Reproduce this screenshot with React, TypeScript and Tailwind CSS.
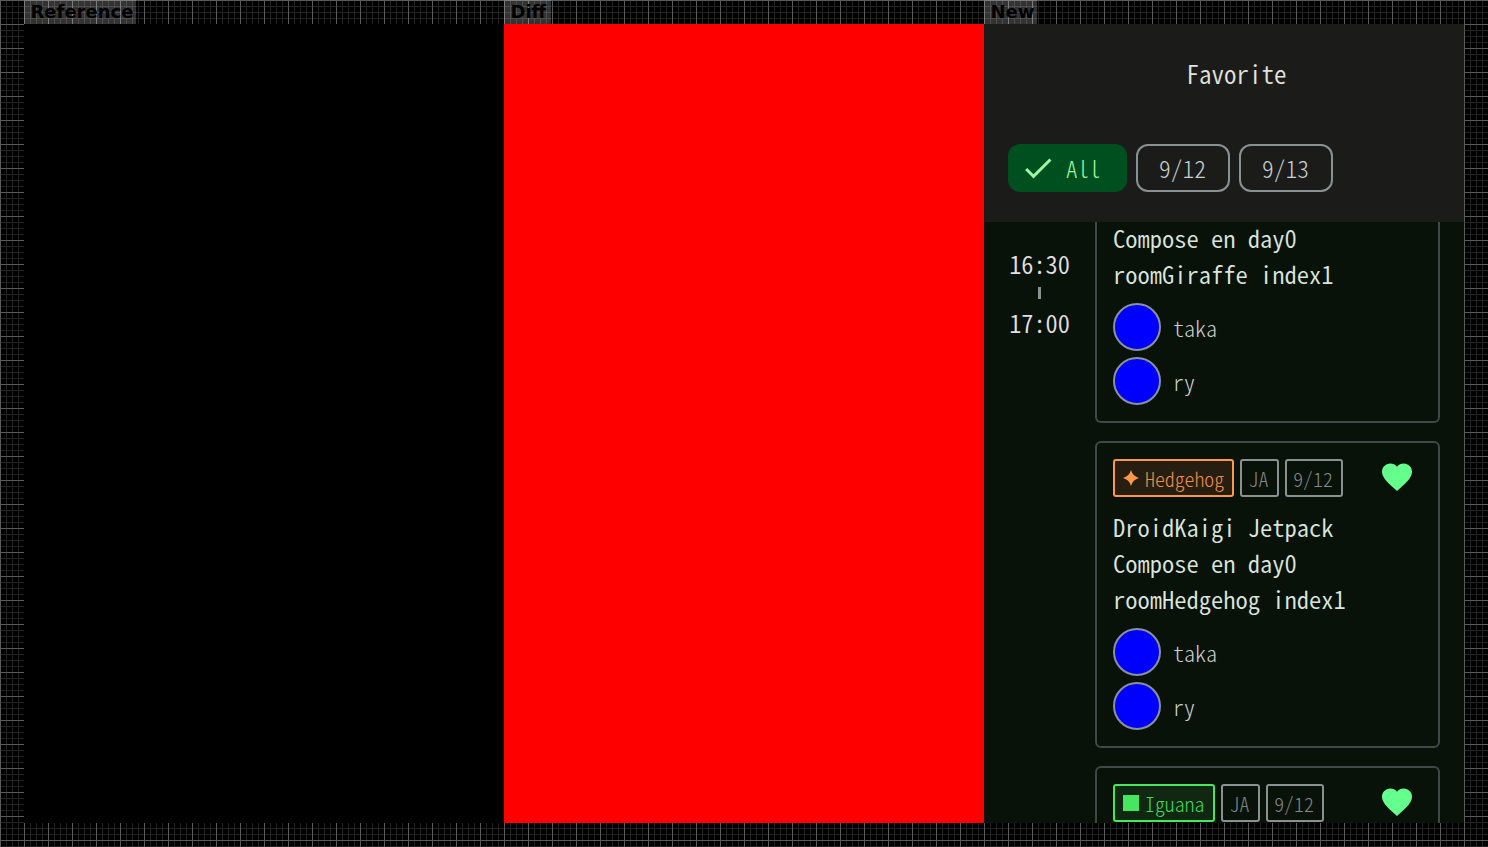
import type { ReactNode } from "react";

const mono = "font-['Noto_Sans_CJK_JP',sans-serif] font-light whitespace-pre [font-feature-settings:'hwid','liga'_0]";

function PaneLabel({ text, size }: { text: string; size: string }) {
  return (
    <div className={`h-6 bg-white/20 pl-[6.5px] font-['DejaVu_Sans',sans-serif] text-[18px] font-bold leading-[24px] text-black ${size}`}>
      {text}
    </div>
  );
}

function Pane({ label, size, children }: { label: string; size: string; children: ReactNode }) {
  return (
    <section className="flex w-[480px] flex-col">
      <PaneLabel text={label} size={size} />
      {children}
    </section>
  );
}

function Heart() {
  return (
    <svg className="ml-auto mr-[7px] size-9" viewBox="0 0 24 24" fill="#64ff8d">
      <path d="M12 21.35l-1.45-1.32C5.4 15.36 2 12.28 2 8.5 2 5.42 4.42 3 7.5 3c1.74 0 3.41.81 4.5 2.09C13.09 3.81 14.76 3 16.5 3 19.58 3 22 5.42 22 8.5c0 3.78-3.4 6.86-8.55 11.54L12 21.35z" />
    </svg>
  );
}

function Star() {
  return (
    <svg className="size-4" viewBox="0 0 16 16" fill="#ff974b">
      <path d="M8 0Q9.7 6.3 16 8Q9.7 9.7 8 16Q6.3 9.7 0 8Q6.3 6.3 8 0Z" />
    </svg>
  );
}

function Tag({ text, size }: { text: string; size: string }) {
  return (
    <div className={`flex h-[38px] items-center justify-center rounded-[3px] border-2 border-[#8b9193] pr-0.5 pt-0.5 text-[19.8px] leading-none text-[#828886] ${size}`}>
      {text}
    </div>
  );
}

function Speaker({ name }: { name: string }) {
  return (
    <div className="flex h-12 items-center">
      <div className="size-12 rounded-full border-2 border-[#8b9297] bg-[#0000ff]" />
      <span className="ml-3 text-[22px] leading-none text-[#c8d1cb]">{name}</span>
    </div>
  );
}

function CardBody({ title }: { title: string }) {
  return (
    <>
      <h2 className="text-[24.5px] font-[350] leading-9 text-[#dce5dc]">
        <span className="relative -top-0.5">{title}</span>
      </h2>
      <div className="mt-[9px] flex flex-col gap-1.5">
        <Speaker name="taka" />
        <Speaker name="ry" />
      </div>
    </>
  );
}

function CardTags({ room, icon, roomStyle }: { room: string; icon: ReactNode; roomStyle: string }) {
  return (
    <div className="mb-3.5 flex h-[38px] gap-1.5">
      <div className={`flex items-center rounded-[3px] border-2 pl-2 text-[19.8px] leading-none ${roomStyle}`}>
        {icon}
        <span className="ml-1.5 pt-0.5">{room}</span>
      </div>
      <Tag text="JA" size="w-[39px]" />
      <Tag text="9/12" size="w-[58px]" />
      <Heart />
    </div>
  );
}

function DayChip({ text }: { text: string }) {
  return (
    <button className="flex h-12 w-[94px] items-center justify-center rounded-xl border-2 border-[#8b9193] pr-px pt-0.5 text-[23.5px] font-light leading-none text-[#c8cfd0]">
      {text}
    </button>
  );
}

function FavoriteScreen() {
  return (
    <main className={`flex h-[799px] flex-col overflow-hidden bg-[#081208] ${mono}`}>
      <header className="flex h-[198px] shrink-0 flex-col bg-[#1b1c1a]">
        <h1 className="mt-[31px] pl-[25px] text-center text-[25px] font-[350] leading-9 text-[#e2e3de]">Favorite</h1>
        <div className="mt-[53px] flex gap-[9px] pl-6">
          <button className="flex h-12 w-[119px] items-center rounded-xl bg-[#00501f] text-[23px] font-light leading-none text-[#9df6a5]">
            <svg className="ml-3 size-9" viewBox="0 0 24 24" fill="#9df6a5">
              <path d="M9 16.17L4.83 12l-1.42 1.41L9 19 21 7l-1.41-1.41z" />
            </svg>
            <span className="ml-[10px]">All</span>
          </button>
          <DayChip text="9/12" />
          <DayChip text="9/13" />
        </div>
      </header>
      <div className="flex min-h-0 flex-1 overflow-hidden">
        <aside className="flex w-[111px] flex-col items-center pt-6 text-[24.3px] font-[350] leading-9 text-[#e5e0e3]">
          <span>16:30</span>
          <span className="mt-[5px] h-3 w-[3px] bg-[#8b9193]" />
          <span className="mt-1.5">17:00</span>
        </aside>
        <div className="flex w-[345px] flex-col gap-[18px]">
          <article className="h-[201px] shrink-0 rounded-b-md border-2 border-t-0 border-[#40484c] px-4">
            <CardBody title={"Compose en day0\nroomGiraffe index1"} />
          </article>
          <article className="h-[307px] shrink-0 rounded-md border-2 border-[#40484c] p-4">
            <CardTags room="Hedgehog" icon={<Star />} roomStyle="w-[121px] border-[#ff974b] bg-[#251e11] text-[#ee8d47]" />
            <CardBody title={"DroidKaigi Jetpack\nCompose en day0\nroomHedgehog index1"} />
          </article>
          <article className="min-h-0 flex-1 rounded-t-md border-2 border-b-0 border-[#40484c] px-4 pt-4">
            <CardTags
              room="Iguana"
              icon={<span className="size-4 bg-[#45e761]" />}
              roomStyle="w-[102px] border-[#45e761] bg-[#102711] text-[#42d85c]"
            />
          </article>
        </div>
      </div>
    </main>
  );
}

export default function App() {
  return (
    <div className="flex h-[847px] w-[1488px] overflow-hidden bg-black bg-[linear-gradient(to_right,#5b5b5b_1px,transparent_1px),linear-gradient(to_bottom,#5b5b5b_1px,transparent_1px),linear-gradient(to_right,#222222_1px,transparent_1px),linear-gradient(to_bottom,#222222_1px,transparent_1px)] bg-[length:24px_24px,24px_24px,6px_6px,6px_6px] pl-6">
      <Pane label="Reference" size="w-[112px]">
        <div className="h-[799px] bg-black" />
      </Pane>
      <Pane label="Diff" size="w-[47px]">
        <div className="h-[799px] bg-[#ff0000]" />
      </Pane>
      <Pane label="New" size="w-[53px]">
        <FavoriteScreen />
      </Pane>
    </div>
  );
}
